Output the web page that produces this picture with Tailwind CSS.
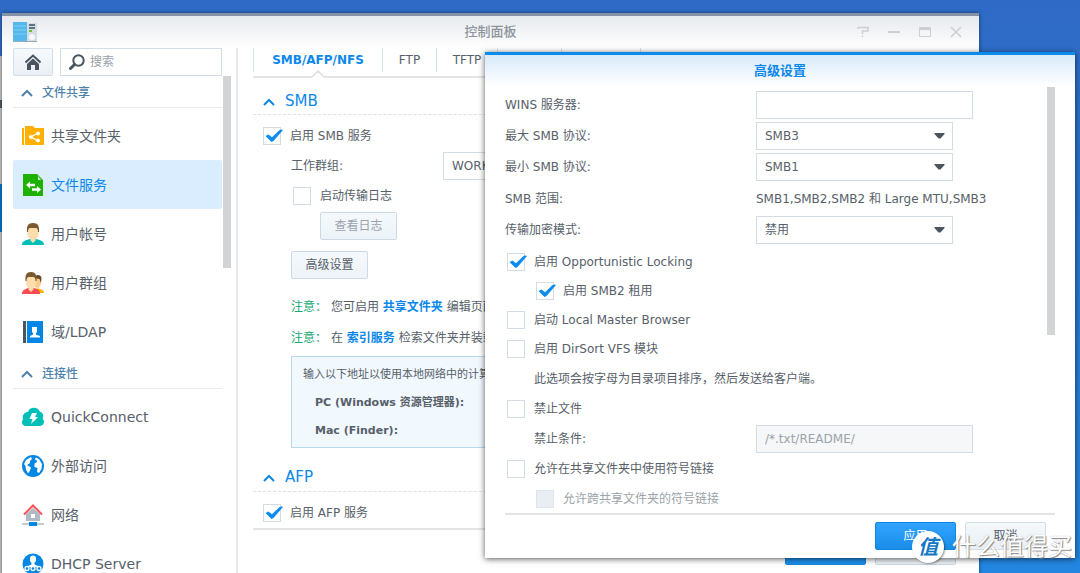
<!DOCTYPE html>
<html lang="zh-CN">
<head>
<meta charset="utf-8">
<title>控制面板</title>
<script src="https://cdn.jsdelivr.net/npm/@tailwindcss/browser@4"></script>
</head>
<body class="relative h-screen overflow-hidden bg-linear-to-b from-[#2f6ac6] to-[#2387e2] font-['DejaVu_Sans','Noto_Sans_CJK_SC',sans-serif] text-xs text-[#576069]">

<svg class="hidden">
  <symbol id="tick" viewBox="0 0 20 18"><path d="M2.500 9l3-1.500L9 10.300l7-6.800q2-1.500 4-.500L10.500 14l-2 1z" fill="#0c8cf0"/></symbol>
  <symbol id="up" viewBox="0 0 12 8"><path d="M1 7l5-5 5 5" fill="none" stroke="currentColor" stroke-width="2"/></symbol>
  <symbol id="down" viewBox="0 0 11 6"><path d="M.500 0h10v1L6.500 5.500h-2L.500 1z" fill="#4b5560"/></symbol>
</svg>

<!-- Edge of a window lying behind -->
<div class="absolute top-14 bottom-0 left-0 flex w-0.5 flex-col bg-[#c4c6c8]">
  <div class="mt-11 h-2 bg-[#505860]"></div>
  <div class="mt-19 h-12 bg-[#0878d0]"></div>
</div>

<!-- Control panel window -->
<main class="absolute top-[13px] right-[101px] -bottom-4 left-0.5 flex flex-col overflow-hidden border-t-3 border-[#8393a5] bg-white shadow-[0_0_4px_rgba(0,0,0,0.5)]">
  <header class="relative flex h-8 shrink-0 items-center bg-linear-to-b from-[#e6e9ed] to-white px-[11px]">
    <svg class="h-[21px] w-6" viewBox="0 0 24 21"><path d="M0 0h14v19H0z" fill="#55b7ec"/><path d="M1 4h12M1 8h12M1 12h12" stroke="#7fcdf4"/><path d="M14 1h10v19H14z" fill="#d5dce2"/><path d="M0 19h24v1H0z" fill="#9aabb8"/><path d="M16 3h6M16 6h6" stroke="#5d7380" stroke-width="2"/><path d="M16 9h3" stroke="#6cbd37" stroke-width="2"/><circle cx="19" cy="15" r="3" fill="#f6f8fa"/></svg>
    <h1 class="flex-1 pl-[89px] text-center text-[13px] font-medium text-[#8d949b]">控制面板</h1>
    <div class="flex gap-[15px] pr-1 text-[#cbcfd3]">
      <button aria-label="帮助" class="h-4 w-4"><svg viewBox="0 0 16 16" fill="none" stroke="currentColor" stroke-width="1.500"><path d="M3 5V3.500h10V7H7.500v3M7.500 11.500V13"/></svg></button>
      <button aria-label="最小化" class="h-4 w-4"><svg viewBox="0 0 16 16" fill="none" stroke="currentColor" stroke-width="2"><path d="M2 8h12"/></svg></button>
      <button aria-label="最大化" class="h-4 w-4"><svg viewBox="0 0 16 16" fill="none" stroke="currentColor"><path d="M2.500 3.500h11v9h-11z"/><path d="M2 5h12" stroke-width="2"/></svg></button>
      <button aria-label="关闭" class="h-4 w-4"><svg viewBox="0 0 16 16" fill="none" stroke="currentColor" stroke-width="1.500"><path d="M3 3l10 10M13 3L3 13"/></svg></button>
    </div>
  </header>

  <div class="flex min-h-0 flex-1">
    <aside class="flex w-[236px] shrink-0 border-r-2 border-[#e6e8ea] pl-[11px] text-sm">
      <nav class="w-[209px]">
        <div class="flex gap-[7px]">
          <button aria-label="主页" class="flex h-7 w-10 items-center justify-center rounded-xs border border-[#d3dde8] bg-linear-to-b from-[#f7fafd] to-[#eaf0f5]">
            <svg class="h-4 w-4" viewBox="0 0 16 16"><path d="M.500 8.500L8 1.500l7.500 7" fill="none" stroke="#4b5560" stroke-width="2"/><path d="M8 4.500l6 5.500v6h-4v-5H6v5H2v-6z" fill="#4b5560"/></svg>
          </button>
          <label class="flex h-7 flex-1 items-center gap-[5px] border border-[#d3dde8] pl-2">
            <svg class="h-4 w-4 shrink-0" viewBox="0 0 16 16" fill="none" stroke="#4b5560"><circle cx="9.500" cy="6.500" r="5.200" stroke-width="2"/><path d="M5.500 10.500l-4 4" stroke-width="3" stroke-linecap="round"/></svg>
            <input type="search" aria-label="搜索" placeholder="搜索" class="w-full min-w-0 text-xs outline-none placeholder:text-[#9aa2aa]">
          </label>
        </div>
        <h2 class="flex h-8 items-center gap-[9px] border-b border-[#e6ecf1] pt-0.5 pl-2 text-xs font-medium text-[#4e82ab]"><svg class="h-2 w-3"><use href="#up"/></svg>文件共享</h2>
        <ul class="pt-[3px]">
          <li><a href="#" class="flex h-[49px] items-center gap-[7px] pl-[9px]"><svg class="h-[22px] w-[22px]" viewBox="0 0 22 22"><path d="M0 3h2v17H0zM3 1h8l2 2h9v17H3z" fill="#ffb000"/><path d="M16 8l-7 4 7 4" fill="none" stroke="#fff" stroke-width="1.300"/><circle cx="9" cy="12" r="2" fill="#fff"/><circle cx="16" cy="8.500" r="2" fill="#fff"/><circle cx="16" cy="15.500" r="2" fill="#fff"/></svg>共享文件夹</a></li>
          <li><a href="#" aria-current="page" class="flex h-[49px] items-center gap-[7px] rounded-xs bg-[#daedff] pl-[9px] text-[#0c88ea]"><svg class="h-[22px] w-[22px]" viewBox="0 0 22 22"><path d="M1 0h14l6 6v16H1z" fill="#1eb100"/><path d="M16 2l3 4h-3z" fill="#daf5d0"/><path d="M4 11l4-3.500v2.200h5v2.500H8v2.300zM19 15.500L15 12v2.200h-5v2.500h5V19z" fill="#fff"/></svg>文件服务</a></li>
          <li><a href="#" class="flex h-[49px] items-center gap-[7px] pl-[9px]"><svg class="h-[22px] w-[22px]" viewBox="0 0 22 22"><path d="M0 22c0-4 3-4.500 8-6h6c5 1.500 8 2 8 6z" fill="#00bfba"/><path d="M5.500 5h11v6c0 2-1.500 4-3 5v1.500L11 20l-2.500-2.500V16c-1.500-1-3-3-3-5z" fill="#ffdcac"/><path d="M5 9c-.500-6 1-9 6-9s6.500 3 6 9h-1c0-3-1-4-2-4H8C7 5 6 6 6 9z" fill="#7a5830"/></svg>用户帐号</a></li>
          <li><a href="#" class="flex h-[49px] items-center gap-[7px] pl-[9px]"><svg class="h-[22px] w-[22px]" viewBox="0 0 22 22"><path d="M14 16c5 1 8 2 8 5h-6z" fill="#ffb400"/><path d="M13 6h6v6l-3 5-3-2z" fill="#f8cb91"/><path d="M12 6c1-4 7-4 7.500 0l-.500 5-1.500-4z" fill="#6a4926"/><path d="M0 22c0-4 3-4.500 6-6h6c4 1.500 6 2 6 6z" fill="#fb4a51"/><path d="M4 5h10v6c0 2-1 4-2.500 5v1.500L9 20l-2.500-2.500V16C5 15 4 13 4 11z" fill="#ffdcac"/><path d="M3.500 9C3 3 4.500 0 9 0s6 3 5.500 9h-1c0-3-1-4-2-4h-5c-1 0-2 1-2 4z" fill="#7a5830"/></svg>用户群组</a></li>
          <li><a href="#" class="flex h-[49px] items-center gap-[7px] pl-[9px]"><svg class="h-[22px] w-[22px]" viewBox="0 0 22 22"><path d="M1 0h3v22H1z" fill="#4b5560"/><path d="M5 0h16v22H5z" fill="#0086e5"/><path d="M10 6h5v5l-1 1v1.500l4 1.500v1.500H8V15l3-1.500V12l-1-1z" fill="#fff"/></svg>域/LDAP</a></li>
        </ul>
        <h2 class="mt-px flex h-8 items-center gap-[9px] border-b border-[#e6ecf1] pt-0.5 pl-2 text-xs font-medium text-[#4e82ab]"><svg class="h-2 w-3"><use href="#up"/></svg>连接性</h2>
        <ul class="pt-[3px]">
          <li><a href="#" class="flex h-[49px] items-center gap-[7px] pl-[9px]"><svg class="h-[22px] w-[22px]" viewBox="0 0 22 22"><path d="M4 20c-4 0-5-4-3-6.500C0 10 2 6 6 6c1-5 10-6 12 0 3 0 4 4 2.500 7 3 2 1 7-2.500 7z" fill="#00bfb8"/><path d="M10 7h5l-2 4h3l-7 7 1.500-5H7.500z" fill="#fff"/></svg>QuickConnect</a></li>
          <li><a href="#" class="flex h-[49px] items-center gap-[7px] pl-[9px]"><svg class="h-[22px] w-[22px]" viewBox="0 0 22 22"><circle cx="11" cy="11" r="11" fill="#0086e5"/><path d="M4 5l5-3 1 2-2 2v2l-3 2 4 2.500-1 3-2 3-2-4-.500-3.500L2 9zM14 2.500l3 1.500 3 5-.500 5-2.500 4-2-1 .500-4-3-1v-3.500l2.500-1.500-.500-2-2-.500z" fill="#fff"/></svg>外部访问</a></li>
          <li><a href="#" class="flex h-[49px] items-center gap-[7px] pl-[9px]"><svg class="h-[22px] w-[22px]" viewBox="0 0 22 22"><path d="M4 10l7-6 7 6v7H4z" fill="#b0bac4"/><path d="M9 10h4v4H9z" fill="#fff"/><path d="M2 10.500l9-9 9 9" fill="none" stroke="#fb5258" stroke-width="2"/><path d="M0 20h22" stroke="#b0bac4" stroke-width="1.500"/><path d="M7 18h8v4H7z" fill="#0086e5"/></svg>网络</a></li>
          <li><a href="#" class="flex h-[49px] items-center gap-[7px] pl-[9px]"><svg class="h-[22px] w-[22px]" viewBox="0 0 22 22"><circle cx="11" cy="11" r="10.500" fill="#0086e5"/><path d="M8 5.500a3 3 0 016 0V8l-1.500 2v1.500L16 13v1H6v-1l3.500-1.500V10L8 8z" fill="#fff"/><g fill="#0086e5" stroke="#fff" stroke-width="1.300"><circle cx="5" cy="15.500" r="2"/><circle cx="11" cy="15.500" r="2"/><circle cx="17" cy="15.500" r="2"/></g></svg>DHCP Server</a></li>
        </ul>
      </nav>
      <div class="mt-7 ml-px h-48 w-2 bg-[#d2d4d6]"></div>
    </aside>

    <section class="flex min-w-0 flex-1 flex-col pr-[21px] pl-[15px]">
      <nav class="flex h-[30px] shrink-0 items-start border-b-2 border-[#e2e4e6]">
        <a href="#" class="relative flex h-6 w-[129px] items-center justify-center border-l border-[#d9e2ec] font-bold text-[#0c88ea]">SMB/AFP/NFS
          <svg class="absolute top-[22px] left-14 h-2 w-4" viewBox="0 0 16 8"><path d="M1 8V6.500L8 1l7 5.500V8z" fill="#fff"/><path d="M0 7h2l6-6 6 6h2" fill="none" stroke="#dcdfe2" stroke-width="1.500"/></svg>
        </a>
        <a href="#" class="flex h-6 w-[54px] items-center justify-center border-l border-[#d9e2ec]">FTP</a>
        <a href="#" class="flex h-6 w-[61px] items-center justify-center border-l border-[#d9e2ec]">TFTP</a>
        <a href="#" class="flex h-6 w-16 items-center justify-center border-l border-[#d9e2ec]">rsync</a>
        <a href="#" class="flex h-6 w-20 items-center justify-center border-x border-[#d9e2ec]">WebDAV</a>
      </nav>

      <div class="h-[452px] shrink-0 overflow-hidden border-b-2 border-[#e2e4e6]">
        <h2 class="mt-2.5 flex h-[27px] items-center gap-2.5 border-b border-dashed border-[#dce2e8] pt-px pl-2.5 text-[15px] text-[#0c88ea]"><svg class="h-2 w-3"><use href="#up"/></svg>SMB</h2>
        <div class="pt-[7px] pl-2.5">
          <label class="flex h-7 items-center gap-[9px]"><span class="relative h-[18px] w-[18px]"><input type="checkbox" checked class="peer block h-full w-full appearance-none border border-[#d3dce6] bg-white"><svg class="pointer-events-none absolute top-0 left-0 hidden h-[18px] w-5 peer-checked:block"><use href="#tick"/></svg></span>启用 SMB 服务</label>
          <div class="mt-0.5 flex h-7 items-center pl-7">
            <label for="workgroup" class="w-[152px]">工作群组:</label>
            <input id="workgroup" value="WORKGROUP" class="h-7 w-[217px] border border-[#d3dce6] px-2">
          </div>
          <label class="mt-0.5 flex h-7 items-center gap-[9px] pl-[30px]"><input type="checkbox" class="h-[18px] w-[18px] appearance-none border border-[#d3dce6] bg-white">启动传输日志</label>
          <button disabled class="mt-0.5 ml-[57px] block h-7 w-[77px] rounded-xs border border-[#cddae6] bg-linear-to-b from-[#f5f9fc] to-[#edf3f8] text-[#9aa3ac]">查看日志</button>
          <button class="mt-[11px] ml-7 block h-7 w-[77px] rounded-xs border border-[#cddae6] bg-linear-to-b from-[#f5f9fc] to-[#edf3f8]">高级设置</button>
          <p class="mt-[18px] ml-7 flex h-5 items-center gap-1 whitespace-nowrap"><span class="w-9 text-[#16a873]">注意：</span><span>您可启用 <a href="#" class="font-bold text-[#0c88ea]">共享文件夹</a> 编辑页面</span></p>
          <p class="mt-[11px] ml-7 flex h-5 items-center gap-1 whitespace-nowrap"><span class="w-9 text-[#16a873]">注意：</span><span>在 <a href="#" class="font-bold text-[#0c88ea]">索引服务</a> 检索文件夹并装载</span></p>
          <div class="mt-2 ml-7 h-[92px] border border-[#b9d9ef] bg-[#f1f8fe] px-[11px] pt-1 text-[11px]">
            <p class="flex h-7 items-center whitespace-nowrap">输入以下地址以使用本地网络中的计算机访问</p>
            <p class="flex h-7 items-center pl-3 font-bold">PC (Windows 资源管理器):</p>
            <p class="flex h-7 items-center pl-3 font-bold">Mac (Finder):</p>
          </div>
        </div>
        <h2 class="mt-4 flex h-7 items-center gap-2.5 border-b border-dashed border-[#dce2e8] pt-px pl-2.5 text-[15px] text-[#0c88ea]"><svg class="h-2 w-3"><use href="#up"/></svg>AFP</h2>
        <label class="mt-[7px] flex h-7 items-center gap-[9px] pl-2.5"><span class="relative h-[18px] w-[18px]"><input type="checkbox" checked class="peer block h-full w-full appearance-none border border-[#d3dce6] bg-white"><svg class="pointer-events-none absolute top-0 left-0 hidden h-[18px] w-5 peer-checked:block"><use href="#tick"/></svg></span>启用 AFP 服务</label>
      </div>
      <footer class="mt-[7px] flex shrink-0 justify-end gap-[9px] pr-0.5">
        <button class="h-7 w-[81px] rounded-xs border border-[#1384dc] bg-[#1c91ec] text-white">应用</button>
        <button class="h-7 w-[81px] rounded-xs border border-[#cddae6] bg-[#edf2f6]">重置</button>
      </footer>
    </section>
  </div>
</main>

<!-- Advanced settings dialog -->
<section role="dialog" aria-labelledby="dlg-title" class="absolute top-[52px] right-[5px] bottom-[15px] left-[485px] flex flex-col border-t-3 border-[#0c8bea] bg-white shadow-[0_1px_6px_rgba(0,0,0,0.65)]">
  <h2 id="dlg-title" class="flex h-8 shrink-0 items-center justify-center bg-linear-to-b from-[#d8eafa] to-white text-[13px] font-bold text-[#0c88ea]">高级设置</h2>
  <div class="mx-5 flex min-h-0 flex-1 border-b-2 border-[#e2e4e6]">
    <form class="min-w-0 flex-1 pt-1">
      <div class="grid grid-cols-[251px_1fr] items-center gap-y-[3px]">
        <label for="wins">WINS 服务器:</label>
        <input id="wins" class="h-7 w-[217px] border border-[#d3dce6] px-2">
        <label for="max">最大 SMB 协议:</label>
        <div class="relative w-[197px]"><select id="max" class="block h-7 w-full appearance-none border border-[#d3dce6] bg-white px-2"><option>SMB3</option></select><svg class="pointer-events-none absolute top-[11px] right-2 h-1.5 w-[11px]"><use href="#down"/></svg></div>
        <label for="min">最小 SMB 协议:</label>
        <div class="relative w-[197px]"><select id="min" class="block h-7 w-full appearance-none border border-[#d3dce6] bg-white px-2"><option>SMB1</option></select><svg class="pointer-events-none absolute top-[11px] right-2 h-1.5 w-[11px]"><use href="#down"/></svg></div>
        <span class="pt-px">SMB 范围:</span>
        <span class="flex h-[29px] items-center pt-px">SMB1,SMB2,SMB2 和 Large MTU,SMB3</span>
        <label for="enc">传输加密模式:</label>
        <div class="relative w-[197px]"><select id="enc" class="block h-7 w-full appearance-none border border-[#d3dce6] bg-white px-2"><option>禁用</option></select><svg class="pointer-events-none absolute top-[11px] right-2 h-1.5 w-[11px]"><use href="#down"/></svg></div>
      </div>
      <div class="mt-1 flex flex-col gap-px pl-0.5">
        <label class="flex h-7 items-center gap-[9px]"><span class="relative h-[18px] w-[18px]"><input type="checkbox" checked class="peer block h-full w-full appearance-none border border-[#d3dce6] bg-white"><svg class="pointer-events-none absolute top-0 left-0 hidden h-[18px] w-5 peer-checked:block"><use href="#tick"/></svg></span>启用 Opportunistic Locking</label>
        <label class="flex h-7 items-center gap-[9px] pl-[29px]"><span class="relative h-[18px] w-[18px]"><input type="checkbox" checked class="peer block h-full w-full appearance-none border border-[#d3dce6] bg-white"><svg class="pointer-events-none absolute top-0 left-0 hidden h-[18px] w-5 peer-checked:block"><use href="#tick"/></svg></span>启用 SMB2 租用</label>
        <label class="flex h-7 items-center gap-[9px]"><input type="checkbox" class="h-[18px] w-[18px] appearance-none border border-[#d3dce6] bg-white">启动 Local Master Browser</label>
        <label class="flex h-7 items-center gap-[9px]"><input type="checkbox" class="h-[18px] w-[18px] appearance-none border border-[#d3dce6] bg-white">启用 DirSort VFS 模块</label>
      </div>
      <div class="mt-0.5 flex flex-col gap-0.5 pl-0.5">
        <p class="flex h-7 items-center pl-[27px]">此选项会按字母为目录项目排序，然后发送给客户端。</p>
        <label class="flex h-7 items-center gap-[9px]"><input type="checkbox" class="h-[18px] w-[18px] appearance-none border border-[#d3dce6] bg-white">禁止文件</label>
        <div class="flex h-7 items-center pl-[27px]">
          <label for="veto" class="w-[222px]">禁止条件:</label>
          <input id="veto" disabled value="/*.txt/README/" class="h-7 w-[217px] border border-[#d3dce6] bg-[#f5f7f9] px-2 text-[#9ba3aa]">
        </div>
        <label class="flex h-7 items-center gap-[9px]"><input type="checkbox" class="h-[18px] w-[18px] appearance-none border border-[#d3dce6] bg-white">允许在共享文件夹中使用符号链接</label>
        <label class="flex h-7 items-center gap-[9px] pl-[29px] text-[#9ba3aa]"><input type="checkbox" disabled class="h-[18px] w-[18px] appearance-none border border-[#dde4eb] bg-[#e9eef2]">允许跨共享文件夹的符号链接</label>
      </div>
    </form>
    <div class="h-62 w-2 shrink-0 bg-[#d2d4d6]"></div>
  </div>
  <footer class="flex h-[43px] shrink-0 items-start justify-end gap-[9px] pt-[7px] pr-[29px]">
    <button class="h-7 w-[81px] rounded-xs border border-[#1384dc] bg-linear-to-b from-[#30a4ff] to-[#188de8] text-white">应用</button>
    <button class="h-7 w-[81px] rounded-xs border border-[#d3dde6] bg-linear-to-b from-[#f5f9fc] to-[#e9eff4]">取消</button>
  </footer>
</section>

<!-- Site watermark -->
<div class="pointer-events-none absolute right-2 bottom-2.5 flex items-center gap-2">
  <span class="flex h-8 w-8 items-center justify-center rounded-full bg-white text-xl font-bold text-[#1477c4] italic shadow-[1px_1px_2px_rgba(0,0,0,0.4)]">值</span>
  <span class="text-2xl leading-8 text-white [text-shadow:1px_1px_1px_#888,0_0_1px_#aaa]">什么值得买</span>
</div>
</body>
</html>
